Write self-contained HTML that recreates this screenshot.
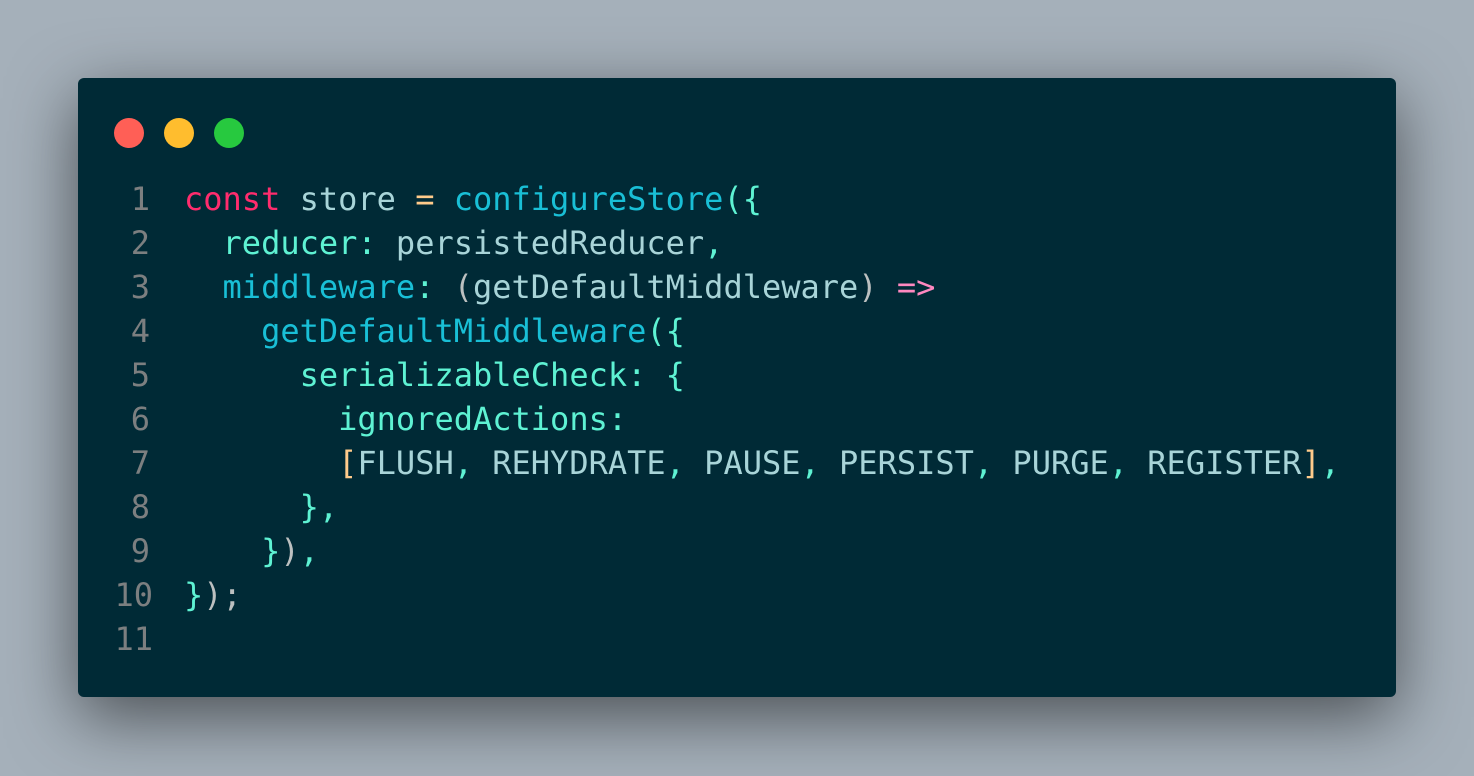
<!DOCTYPE html>
<html><head><style>
html,body{margin:0;padding:0}
body{width:1474px;height:776px;background:#a5b0ba;position:relative;overflow:hidden}
.win{position:absolute;left:78px;top:78px;width:1318px;height:619px;background:#002a36;border-radius:6px;box-shadow:0 20px 68px rgba(0,0,0,0.55)}
.dot{position:absolute;top:40px;width:30px;height:30px;border-radius:50%}
pre{position:absolute;left:0;top:99px;margin:0;font-family:"DejaVu Sans Mono","Liberation Mono",monospace;font-size:32px;line-height:44px;color:#a8d4d8}
.ln{display:inline-block;width:75px;text-align:right;color:#7c7f80;margin-right:31px}
.s{position:relative;left:-3px}
.k{color:#ff2c6d}.o{color:#ffcb8b}.f{color:#19bfd6}.m{color:#5ef2d3}.p{color:#bcc0c0}.a{color:#ff88c0}.pr{color:#19bfd6}
</style></head><body>
<div class="win">
<div class="dot" style="left:36px;background:#ff5f56"></div>
<div class="dot" style="left:86px;background:#ffbd2e"></div>
<div class="dot" style="left:136px;background:#27c93f"></div>
<pre><span class="ln"><span class="s">1</span></span><span class="k">const</span> store <span class="o">=</span> <span class="f">configureStore</span><span class="m">(</span><span class="m">{</span>
<span class="ln"><span class="s">2</span></span>  <span class="m">reducer:</span> persistedReducer<span class="m">,</span>
<span class="ln"><span class="s">3</span></span>  <span class="pr">middleware</span><span class="m">:</span> <span class="p">(</span>getDefaultMiddleware<span class="p">)</span> <span class="a">=&gt;</span>
<span class="ln"><span class="s">4</span></span>    <span class="f">getDefaultMiddleware</span><span class="m">({</span>
<span class="ln"><span class="s">5</span></span>      <span class="m">serializableCheck: {</span>
<span class="ln"><span class="s">6</span></span>        <span class="m">ignoredActions:</span>
<span class="ln"><span class="s">7</span></span>        <span class="o">[</span>FLUSH<span class="m">,</span> REHYDRATE<span class="m">,</span> PAUSE<span class="m">,</span> PERSIST<span class="m">,</span> PURGE<span class="m">,</span> REGISTER<span class="o">]</span><span class="m">,</span>
<span class="ln"><span class="s">8</span></span>      <span class="m">},</span>
<span class="ln"><span class="s">9</span></span>    <span class="m">}</span><span class="p">)</span><span class="m">,</span>
<span class="ln">10</span><span class="m">}</span><span class="p">);</span>
<span class="ln">11</span></pre>
</div>
</body></html>
